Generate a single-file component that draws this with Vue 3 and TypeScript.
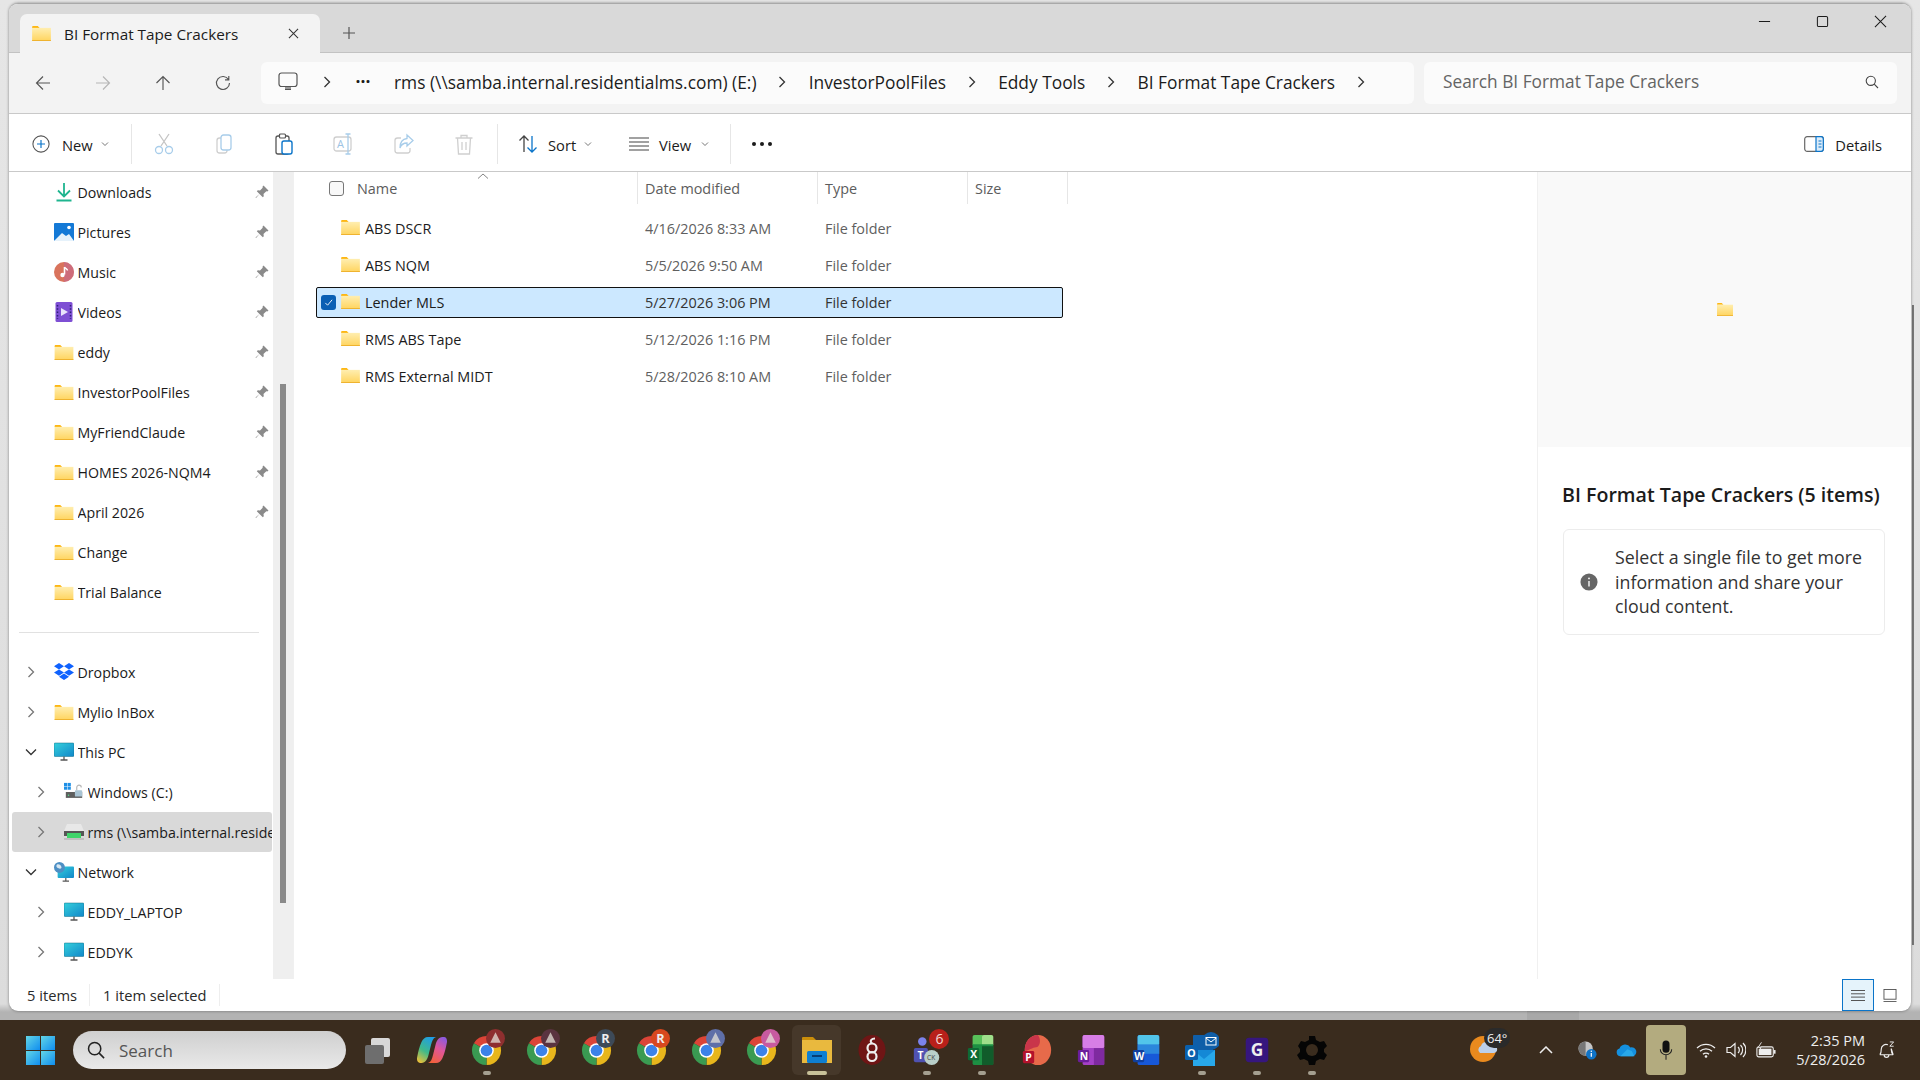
<script setup lang="ts">
interface NavRow {
  label: string
  icon: string
  level?: number
  chev?: "right" | "down"
  pinned?: boolean
  current?: boolean
}

const quickRows: NavRow[] = [
  { label: "Downloads", icon: "downloads", pinned: true },
  { label: "Pictures", icon: "pictures", pinned: true },
  { label: "Music", icon: "music", pinned: true },
  { label: "Videos", icon: "videos", pinned: true },
  { label: "eddy", icon: "folder", pinned: true },
  { label: "InvestorPoolFiles", icon: "folder", pinned: true },
  { label: "MyFriendClaude", icon: "folder", pinned: true },
  { label: "HOMES 2026-NQM4", icon: "folder", pinned: true },
  { label: "April 2026", icon: "folder", pinned: true },
  { label: "Change", icon: "folder" },
  { label: "Trial Balance", icon: "folder" },
]

const treeRows: NavRow[] = [
  { label: "Dropbox", icon: "dropbox", chev: "right" },
  { label: "Mylio InBox", icon: "folder", chev: "right" },
  { label: "This PC", icon: "monitor", chev: "down" },
  { label: "Windows (C:)", icon: "cdrive", chev: "right", level: 1 },
  { label: "rms (\\\\samba.internal.residentialms.com) (E:)", icon: "netdrive", chev: "right", level: 1, current: true },
  { label: "Network", icon: "network", chev: "down" },
  { label: "EDDY_LAPTOP", icon: "monitor", chev: "right", level: 1 },
  { label: "EDDYK", icon: "monitor", chev: "right", level: 1 },
]

const files = [
  { name: "ABS DSCR", date: "4/16/2026 8:33 AM" },
  { name: "ABS NQM", date: "5/5/2026 9:50 AM" },
  { name: "Lender MLS", date: "5/27/2026 3:06 PM", selected: true },
  { name: "RMS ABS Tape", date: "5/12/2026 1:16 PM" },
  { name: "RMS External MIDT", date: "5/28/2026 8:10 AM" },
]

const crumbs = ["InvestorPoolFiles", "Eddy Tools", "BI Format Tape Crackers"]

const apps = [
  { id: "taskview" },
  { id: "copilot" },
  { id: "chrome", badge: "#8e2f2f", dot: true },
  { id: "chrome", badge: "#5a3340" },
  { id: "chrome", badge: "#3d4a58", letter: "R" },
  { id: "chrome", badge: "#d8481f", letter: "R" },
  { id: "chrome", badge: "#5f6fa8" },
  { id: "chrome", badge: "#c75aa0" },
  { id: "explorer", active: true },
  { id: "wireguard" },
  { id: "teams", dot: true },
  { id: "excel", dot: true },
  { id: "ppt" },
  { id: "onenote" },
  { id: "word" },
  { id: "outlook", dot: true },
  { id: "gapp", dot: true },
  { id: "gear", dot: true },
]
</script>

<template>
  <div class="screen">
    <svg class="sprite" aria-hidden="true">
      <defs>
        <linearGradient id="fold" x1="0" y1="0" x2="0" y2="1">
          <stop offset="0" stop-color="#ffeeb0" />
          <stop offset="1" stop-color="#ffd45e" />
        </linearGradient>
        <linearGradient id="screenBlue" x1="0" y1="0" x2="1" y2="1">
          <stop offset="0" stop-color="#35d0dc" />
          <stop offset="1" stop-color="#1187c9" />
        </linearGradient>
        <linearGradient id="winBlue" x1="0" y1="0" x2="1" y2="1">
          <stop offset="0" stop-color="#63d6e6" />
          <stop offset="1" stop-color="#0f8df0" />
        </linearGradient>
        <linearGradient id="copA" x1="0.7" y1="0" x2="0.2" y2="1">
          <stop offset="0" stop-color="#1f9de6" />
          <stop offset="0.55" stop-color="#3fb98a" />
          <stop offset="1" stop-color="#e8c03a" />
        </linearGradient>
        <linearGradient id="copB" x1="0.7" y1="0" x2="0.2" y2="1">
          <stop offset="0" stop-color="#f2603c" />
          <stop offset="0.55" stop-color="#e0569a" />
          <stop offset="1" stop-color="#8a5ae0" />
        </linearGradient>
      </defs>
      <symbol id="folder" viewBox="0 0 20 16">
        <path d="M0 1.200C0 .5.5 0 1.200 0H6l2 2.200H0z" fill="#fdb714" />
        <rect x="0" y="2" width="20" height="14" fill="url(#fold)" />
        <rect x="0" y="15" width="20" height="1" fill="#eeb02c" />
      </symbol>
      <symbol id="downloads" viewBox="0 0 20 20">
        <path d="M10 1v13M4 8.500l6 6 6-6" fill="none" stroke="#1fb58f" stroke-width="1.800" />
        <path d="M2.500 18.500h15" stroke="#1fb58f" stroke-width="1.800" />
      </symbol>
      <symbol id="pictures" viewBox="0 0 20 20">
        <rect y="1" width="20" height="18" rx="1" fill="#1479d6" />
        <path d="M0 19l8-8 4 3 3-2 5 7z" fill="#e6f2fb" />
        <circle cx="15" cy="5.500" r="1.800" fill="#fff" />
      </symbol>
      <symbol id="music" viewBox="0 0 20 20">
        <circle cx="10" cy="10" r="10" fill="#d9735c" />
        <path d="M10 0a10 10 0 0 1 0 20z" fill="#c4678f" opacity=".6" />
        <path d="M10.500 5v7.500" stroke="#fff" stroke-width="1.600" />
        <path d="M10.500 5c1 1.800 3 1.800 3 3.500" fill="none" stroke="#fff" stroke-width="1.400" />
        <circle cx="8.500" cy="13" r="2.200" fill="#fff" />
      </symbol>
      <symbol id="videos" viewBox="0 0 20 20">
        <rect x="1.500" width="17" height="20" rx="1.500" fill="#7e4fd4" />
        <path d="M7 6l7 4-7 4z" fill="#e9e3fb" />
        <path d="M3.500 3v14M16.500 3v14" stroke="#2f2178" stroke-width="1.500" stroke-dasharray="1.500 1.800" />
      </symbol>
      <symbol id="dropbox" viewBox="0 0 20 18">
        <path d="M5 0l5 3.200-5 3.200L0 3.200zM15 0l5 3.200-5 3.200-5-3.200zM0 9.600l5-3.200 5 3.200-5 3.200zM15 6.400l5 3.200-5 3.200-5-3.200zM5 13.800l5-3.200 5 3.200L10 17z" fill="#0f62fe" />
      </symbol>
      <symbol id="monitor" viewBox="0 0 20 18">
        <rect width="20" height="13.500" rx="1" fill="url(#screenBlue)" stroke="#0f6d86" stroke-width=".5" />
        <path d="M10 13.500v3M6.500 17h7" stroke="#555" stroke-width="1.300" />
      </symbol>
      <symbol id="cdrive" viewBox="0 0 22 20">
        <rect x="0" y="0" width="3.500" height="3.500" fill="#1e8fe6" />
        <rect x="4" y="0" width="3.500" height="3.500" fill="#1e8fe6" />
        <rect x="0" y="4" width="3.500" height="3.500" fill="#1e8fe6" />
        <rect x="4" y="4" width="3.500" height="3.500" fill="#1e8fe6" />
        <path d="M2 10h18v6.500H2z" fill="#5f5f5f" />
        <circle cx="5" cy="13.500" r=".8" fill="#52e08a" />
        <rect x="12" y="8" width="8" height="7" rx="1" fill="#a9c4d4" />
        <path d="M14 8V5a2.500 2.500 0 0 1 5 0" fill="none" stroke="#b8b8b8" stroke-width="1.300" />
      </symbol>
      <symbol id="netdrive" viewBox="0 0 20 16">
        <path d="M3 0h14l3 7H0z" fill="#e8e8e8" />
        <rect y="7" width="20" height="5" fill="#555" />
        <rect x="3" y="9" width="14" height="6" fill="#3fd46a" />
        <rect y="14" width="20" height="2" fill="#bfbfbf" />
      </symbol>
      <symbol id="network" viewBox="0 0 22 22">
        <rect x="4" y="5" width="18" height="12.500" rx="1" fill="url(#screenBlue)" />
        <path d="M13 17.500v3M9.500 21h7" stroke="#555" stroke-width="1.300" />
        <circle cx="6" cy="6" r="6" fill="#4d8fc4" />
        <path d="M3 3c2-1 4 0 5 2s-1 3-3 2-3-2-2-4z" fill="#d8e8f2" />
      </symbol>
      <symbol id="pin" viewBox="0 0 14 14">
        <path d="M8.500.5l5 5-1.200 1-1-.2L8.500 9l.3 2.200-1 1L4.500 9 1 13l-.5-.5L4.500 9 1.800 6.200l1-1L5 5.500 7.700 2.700l-.2-1z" fill="#8a8a8a" />
      </symbol>
      <symbol id="chrome" viewBox="0 0 48 48">
        <path d="M24 24L6.680 14A20 20 0 0 1 41.320 14z" fill="#db4437" />
        <path d="M24 24L41.320 14A20 20 0 0 1 24 44z" fill="#e8b61c" />
        <path d="M24 24L24 44A20 20 0 0 1 6.680 14z" fill="#3a9b52" />
        <circle cx="24" cy="24" r="10" fill="#fff" />
        <circle cx="24" cy="24" r="8" fill="#3b82e8" />
      </symbol>
    </svg>

    <div class="desktop">
      <i class="behind-bar"></i>
      <i class="behind-tab"></i>
      <section class="win">
        <header class="tabstrip">
          <div class="tab">
            <svg class="ic-folder tab-folder"><use href="#folder" /></svg>
            <span class="tab-title">BI Format Tape Crackers</span>
            <svg class="tab-x" viewBox="0 0 12 12"><path d="M1 1l10 10M11 1L1 11" /></svg>
          </div>
          <svg class="tab-plus" viewBox="0 0 12 12"><path d="M6 0v12M0 6h12" /></svg>
          <div class="winctl">
            <svg viewBox="0 0 14 14"><path d="M1 7h12" /></svg>
            <svg viewBox="0 0 14 14"><rect x="1.500" y="1.500" width="11" height="11" rx="1.500" /></svg>
            <svg viewBox="0 0 14 14"><path d="M1 1l12 12M13 1L1 13" /></svg>
          </div>
        </header>

        <nav class="navbar">
          <button class="navbtn">
            <svg viewBox="0 0 16 16"><path d="M15 8H1.500M8 1.500L1.500 8 8 14.500" /></svg>
          </button>
          <button class="navbtn off">
            <svg viewBox="0 0 16 16"><path d="M1 8h13.500M8 1.500L14.500 8 8 14.500" /></svg>
          </button>
          <button class="navbtn">
            <svg viewBox="0 0 16 16"><path d="M8 15V1.500M1.500 8L8 1.500 14.500 8" /></svg>
          </button>
          <button class="navbtn">
            <svg viewBox="0 0 16 16"><path d="M13.500 4.500A6.500 6.500 0 1 0 14.500 8M13.800 1v3.800H10" /></svg>
          </button>
          <div class="addr">
            <svg class="addr-pc" viewBox="0 0 20 20"><rect x="1" y="1" width="18" height="13.500" rx="2.500" /><path d="M7 17.500h6M10 14.500v3M8 14.500v3M12 14.500v3" /></svg>
            <svg class="chev first" viewBox="0 0 12 12"><path d="M3.500 1l5 5-5 5" /></svg>
            <span class="addr-dots">···</span>
            <span class="crumb rms">rms (\\samba.internal.residentialms.com) (E:)</span>
            <svg class="chev" viewBox="0 0 12 12"><path d="M3.500 1l5 5-5 5" /></svg>
            <template v-for="c in crumbs" :key="c">
              <span class="crumb">{{ c }}</span>
              <svg class="chev" viewBox="0 0 12 12"><path d="M3.500 1l5 5-5 5" /></svg>
            </template>
          </div>
          <div class="search">
            <span>Search BI Format Tape Crackers</span>
            <svg viewBox="0 0 14 14"><circle cx="5.800" cy="5.800" r="4.600" /><path d="M9.200 9.200L13 13" /></svg>
          </div>
        </nav>

        <div class="toolbar">
          <svg class="tb-new" viewBox="0 0 20 20">
            <circle cx="10" cy="10" r="9" fill="none" stroke="#555" stroke-width="1.200" />
            <path d="M10 5.500v9M5.500 10h9" stroke="#0a74c9" stroke-width="1.300" />
          </svg>
          <span class="tb-label new">New</span>
          <svg class="caret" viewBox="0 0 8 8"><path d="M1 2.500l3 3 3-3" /></svg>
          <i class="tb-div"></i>
          <svg class="tb-ic first" viewBox="0 0 22 22">
            <path d="M6 1l8 12M16 1L8 13" stroke="#c4c4c4" stroke-width="1.300" fill="none" />
            <circle cx="6" cy="17" r="3.500" fill="none" stroke="#a8cdea" stroke-width="1.300" />
            <circle cx="16" cy="17" r="3.500" fill="none" stroke="#a8cdea" stroke-width="1.300" />
          </svg>
          <svg class="tb-ic" viewBox="0 0 22 22">
            <rect x="4" y="5" width="10" height="15" rx="2.500" fill="none" stroke="#cfcfcf" stroke-width="1.300" />
            <rect x="8" y="2" width="10" height="15" rx="2.500" fill="#fff" stroke="#a8cdea" stroke-width="1.300" />
          </svg>
          <svg class="tb-ic" viewBox="0 0 22 22">
            <rect x="3" y="3" width="13" height="18" rx="2" fill="none" stroke="#555" stroke-width="1.300" />
            <rect x="6.500" y="1" width="6" height="4" rx="1" fill="#fff" stroke="#555" stroke-width="1.200" />
            <rect x="9" y="8" width="10" height="13" rx="2" fill="#fff" stroke="#0a74c9" stroke-width="1.400" />
          </svg>
          <svg class="tb-ic" viewBox="0 0 22 22">
            <rect x="1" y="4" width="17" height="14" rx="2.500" fill="none" stroke="#cfcfcf" stroke-width="1.300" />
            <path d="M15 1v20M12.500 1h5M12.500 21h5" stroke="#a8cdea" stroke-width="1.300" fill="none" />
            <text x="4" y="15" class="tb-a">A</text>
          </svg>
          <svg class="tb-ic" viewBox="0 0 22 22">
            <path d="M8 5H4.500A2.500 2.500 0 0 0 2 7.500v10A2.500 2.500 0 0 0 4.500 20h10a2.500 2.500 0 0 0 2.500-2.500V15" fill="none" stroke="#cfcfcf" stroke-width="1.300" />
            <path d="M14 2l6 5.500-6 5.500V10C10 10 8 12 7 15c0-5 2-9 7-9.500z" fill="#fff" stroke="#a8cdea" stroke-width="1.300" />
          </svg>
          <svg class="tb-ic" viewBox="0 0 22 22">
            <path d="M2.500 5h17M8 5V2.500h6V5M4.500 5l1 16h11l1-16M9 9v8M13 9v8" fill="none" stroke="#cfcfcf" stroke-width="1.300" />
          </svg>
          <i class="tb-div"></i>
          <svg class="tb-sort" viewBox="0 0 20 20">
            <path d="M6 18V2M1.500 6.500L6 2l4.500 4.500" fill="none" stroke="#444" stroke-width="1.300" />
            <path d="M14 2v16M9.500 13.500L14 18l4.500-4.500" fill="none" stroke="#0a74c9" stroke-width="1.300" />
          </svg>
          <span class="tb-label sort">Sort</span>
          <svg class="caret" viewBox="0 0 8 8"><path d="M1 2.500l3 3 3-3" /></svg>
          <svg class="tb-view" viewBox="0 0 20 14"><path d="M0 1h20M0 5h20M0 9h20M0 13h20" /></svg>
          <span class="tb-label view">View</span>
          <svg class="caret" viewBox="0 0 8 8"><path d="M1 2.500l3 3 3-3" /></svg>
          <i class="tb-div last"></i>
          <span class="tb-more"><i></i><i></i><i></i></span>
          <div class="details-btn">
            <svg viewBox="0 0 20 16">
              <rect x=".7" y=".7" width="18.600" height="14.600" rx="2.500" fill="none" stroke="#666" stroke-width="1.200" />
              <path d="M12 .7h5a2.300 2.300 0 0 1 2.300 2.300v10a2.300 2.300 0 0 1-2.300 2.300h-5z" fill="#dcecf9" stroke="#0a74c9" stroke-width="1.200" />
              <path d="M14.500 5h3M14.500 8h3M14.500 11h3" stroke="#0a74c9" stroke-width="1" />
            </svg>
            <span>Details</span>
          </div>
        </div>

        <div class="body">
          <aside class="sidebar">
            <div class="tree">
              <div
                v-for="r in quickRows"
                :key="r.label"
                class="row"
              >
                <span class="row-chev"></span>
                <svg class="row-ic" :class="r.icon === 'folder' ? 'is-folder' : ''"><use :href="'#' + r.icon" /></svg>
                <span class="row-label">{{ r.label }}</span>
                <svg v-if="r.pinned" class="row-pin"><use href="#pin" /></svg>
              </div>
              <div class="tree-sep"><i></i></div>
              <div
                v-for="r in treeRows"
                :key="r.label"
                class="row"
                :class="{ sub: r.level === 1, current: r.current }"
              >
                <svg class="row-chev" :class="r.chev" viewBox="0 0 12 12">
                  <path v-if="r.chev === 'right'" d="M3.500 1l5 5-5 5" />
                  <path v-else d="M1 3.500l5 5 5-5" />
                </svg>
                <svg class="row-ic" :class="r.icon === 'folder' ? 'is-folder' : ''"><use :href="'#' + r.icon" /></svg>
                <span class="row-label">{{ r.label }}</span>
              </div>
            </div>
          </aside>
          <div class="side-track"><i></i></div>

          <main class="files">
            <div class="head">
              <div class="hcell name">
                <span class="hcheck"></span>
                <span>Name</span>
                <svg class="sort-up" viewBox="0 0 12 6"><path d="M1 5.500L6 1l5 4.500" /></svg>
              </div>
              <div class="hcell date">Date modified</div>
              <div class="hcell type">Type</div>
              <div class="hcell size">Size</div>
            </div>
            <div class="rows">
              <div v-for="f in files" :key="f.name" class="frow" :class="{ sel: f.selected }">
                <div class="fname">
                  <span class="fcheck">
                    <svg viewBox="0 0 10 10"><path d="M1.500 5.500l2.500 2.500 5-6" /></svg>
                  </span>
                  <svg class="ic-folder"><use href="#folder" /></svg>
                  <span>{{ f.name }}</span>
                </div>
                <div class="fdate">{{ f.date }}</div>
                <div class="ftype">File folder</div>
              </div>
            </div>
          </main>

          <aside class="pane">
            <div class="preview">
              <svg class="ic-folder prev-folder"><use href="#folder" /></svg>
            </div>
            <h2>BI Format Tape Crackers (5 items)</h2>
            <div class="hint">
              <svg viewBox="0 0 20 20">
                <circle cx="10" cy="10" r="9.500" fill="#666" />
                <path d="M10 9v6" stroke="#fff" stroke-width="1.500" />
                <circle cx="10" cy="6" r="1" fill="#fff" />
              </svg>
              <p>Select a single file to get more information and share your cloud content.</p>
            </div>
          </aside>
        </div>

        <footer class="status">
          <span class="st first">5 items</span>
          <span class="st">1 item selected</span>
          <div class="viewbtns">
            <span class="vb on">
              <svg viewBox="0 0 14 12"><path d="M0 1h14M0 4.300h14M0 7.600h14M0 11h14" /></svg>
            </span>
            <span class="vb">
              <svg viewBox="0 0 14 14"><rect x=".5" y=".5" width="13" height="10.500" /><path d="M0 13.500h14" /></svg>
            </span>
          </div>
        </footer>
      </section>
    </div>

    <div class="taskbar">
      <svg class="startlogo" viewBox="0 0 29 29">
        <rect width="14" height="14" fill="url(#winBlue)" />
        <rect x="15" width="14" height="14" fill="url(#winBlue)" />
        <rect y="15" width="14" height="14" fill="url(#winBlue)" />
        <rect x="15" y="15" width="14" height="14" fill="url(#winBlue)" />
      </svg>
      <div class="tsearch">
        <svg viewBox="0 0 20 20"><circle cx="8.500" cy="8.500" r="6.800" /><path d="M13.500 13.500L19 19" /></svg>
        <span>Search</span>
      </div>
      <div class="apps">
        <div v-for="(a, i) in apps" :key="i" class="app" :class="{ active: a.active }">
          <svg v-if="a.id === 'taskview'" viewBox="0 0 30 30">
            <rect x="9" y="3" width="19" height="19" rx="2" fill="#d8d8d8" />
            <rect x="3" y="10" width="19" height="19" rx="2" fill="#6e6e6e" />
          </svg>
          <svg v-else-if="a.id === 'copilot'" viewBox="0 0 30 30">
            <path d="M11 2h8c-3 1-4 4-5 8l-2.500 10c-1 4-3 8-7 8H3c-2.500 0-3.500-3-2.800-6 1-5 2-10 4.300-15C5.800 4 8 2 11 2z" fill="url(#copA)" />
            <path d="M11 2h8c-3 1-4 4-5 8l-2.500 10c-1 4-3 8-7 8H3c-2.500 0-3.500-3-2.800-6 1-5 2-10 4.300-15C5.800 4 8 2 11 2z" fill="url(#copB)" transform="rotate(180 15 15)" />
          </svg>
          <template v-else-if="a.id === 'chrome'">
            <svg class="chromeic"><use href="#chrome" /></svg>
            <svg class="cbadge" viewBox="0 0 18 18">
              <circle cx="9" cy="9" r="9" :fill="a.badge" />
              <text v-if="a.letter" x="9" y="13" class="cletter">{{ a.letter }}</text>
              <path v-else d="M9 3l5 10H4z" fill="#e6e1d8" opacity=".75" />
            </svg>
          </template>
          <svg v-else-if="a.id === 'explorer'" viewBox="0 0 30 30">
            <path d="M0 3a1 1 0 0 1 1-1h10l3 3H0z" fill="#c98d0a" />
            <rect y="5" width="30" height="23" fill="#e9b93e" />
            <rect x="5" y="16" width="20" height="12" rx="1.500" fill="#0f7fd1" />
            <rect x="10" y="20" width="10" height="2" fill="#073e76" />
          </svg>
          <svg v-else-if="a.id === 'wireguard'" viewBox="0 0 30 30">
            <ellipse cx="15" cy="15" rx="13.500" ry="15" fill="#6f1515" />
            <circle cx="15" cy="13" r="4.500" fill="none" stroke="#eee" stroke-width="2.200" />
            <circle cx="15" cy="21.500" r="4.500" fill="none" stroke="#eee" stroke-width="2.200" />
            <path d="M15 8.500c-3-3 0-5 3-5" fill="none" stroke="#eee" stroke-width="2" />
          </svg>
          <template v-else-if="a.id === 'teams'">
            <svg viewBox="0 0 30 34">
              <circle cx="10" cy="8" r="4.500" fill="#7b83eb" />
              <rect x="1" y="15" width="15" height="15" rx="2" fill="#4f52b2" />
              <text x="5" y="27" class="tapp">T</text>
              <circle cx="20" cy="25" r="8" fill="#b9cfc9" />
              <text x="15" y="28" class="tck">CK</text>
            </svg>
            <span class="tbadge">6</span>
          </template>
          <svg v-else-if="a.id === 'excel'" viewBox="0 0 30 34">
            <rect x="5" y="1" width="12" height="12" rx="2" fill="#58c15a" />
            <rect x="15" y="1" width="12" height="12" rx="2" fill="#9fe08b" />
            <path d="M5 11h22v20a2 2 0 0 1-2 2H7a2 2 0 0 1-2-2z" fill="#1d8f43" />
            <rect x="15" y="13" width="12" height="20" fill="#115c2b" />
            <rect y="15" width="12" height="13" rx="1.500" fill="#0e6a35" />
            <text x="2.500" y="26" class="tapp">X</text>
          </svg>
          <svg v-else-if="a.id === 'ppt'" viewBox="0 0 30 34">
            <ellipse cx="16" cy="17" rx="14" ry="16" fill="#e76a4a" />
            <path d="M16 1C8 1 2 8 2 17c0 3 8-3 12-3s6-8 2-13z" fill="#c9354a" />
            <rect y="18" width="12" height="13" rx="1.500" fill="#b3122c" />
            <text x="2.500" y="29" class="tapp">P</text>
          </svg>
          <svg v-else-if="a.id === 'onenote'" viewBox="0 0 30 34">
            <rect x="5" y="1" width="23" height="32" rx="2" fill="#a440c6" />
            <rect x="5" y="1" width="23" height="14" rx="2" fill="#d77ee6" />
            <rect x="17" y="15" width="11" height="18" fill="#7f2aa0" />
            <rect y="17" width="12" height="13" rx="1.500" fill="#6b1d9c" />
            <text x="2" y="28" class="tapp">N</text>
          </svg>
          <svg v-else-if="a.id === 'word'" viewBox="0 0 30 34">
            <rect x="5" y="1" width="23" height="32" rx="2" fill="#1758d8" />
            <rect x="5" y="1" width="23" height="11" rx="2" fill="#52c5ea" />
            <rect x="5" y="11" width="23" height="10" fill="#2b86dc" />
            <rect y="17" width="12" height="13" rx="1.500" fill="#103f9e" />
            <text x="1.500" y="28" class="tapp">W</text>
          </svg>
          <template v-else-if="a.id === 'outlook'">
            <svg class="outlookic" viewBox="0 0 34 36">
              <rect x="8" y="3" width="20" height="18" rx="1" fill="#0f5ea8" />
              <path d="M8 18h22v16H8z" fill="#1488d6" />
              <path d="M8 18l11 9 11-9v16H8z" fill="#28a8ea" />
              <rect y="13" width="13" height="15" rx="1.500" fill="#0a60ad" />
              <text x="2" y="25" class="tapp">O</text>
              <circle cx="26" cy="9" r="9" fill="#0f5ea8" />
              <rect x="21" y="5.500" width="10" height="7.500" fill="none" stroke="#fff" stroke-width="1" />
              <path d="M21 6l5 4 5-4" fill="none" stroke="#fff" stroke-width="1" />
            </svg>
          </template>
          <svg v-else-if="a.id === 'gapp'" class="gapp" viewBox="0 0 30 30">
            <rect x="2" y="1" width="26" height="28" rx="4" fill="#36167e" />
            <text x="15" y="22" class="gletter">G</text>
          </svg>
          <svg v-else viewBox="0 0 30 30">
            <path d="M12 1h6l1 4 4 2 4-1 3 5-3 3v3l3 3-3 5-4-1-4 2-1 4h-6l-1-4-4-2-4 1-3-5 3-3v-3L1 11l3-5 4 1 4-2z" fill="#050505" />
            <circle cx="15" cy="15" r="6" fill="#3a2c1e" />
          </svg>
          <i v-if="a.dot || a.active" class="app-dot"></i>
        </div>
      </div>

      <div class="tray">
        <div class="tr weather">
          <svg viewBox="0 0 30 34">
            <circle cx="13" cy="20" r="13" fill="#e98a1e" />
            <path d="M10 24a4 4 0 0 1 1-7 6 6 0 0 1 11-1 4 4 0 0 1 2 8z" fill="#bcd0ea" />
          </svg>
          <span class="temp">64°</span>
        </div>
        <div class="tr caret-up">
          <svg viewBox="0 0 14 8"><path d="M1 7l6-6 6 6" /></svg>
        </div>
        <div class="tr cloudinfo">
          <svg viewBox="0 0 22 20">
            <circle cx="9" cy="8" r="7.500" fill="#c6c6c6" />
            <path d="M9 .5a7.500 7.500 0 0 0 0 15z" fill="#777" />
            <circle cx="15" cy="14" r="5.500" fill="#0f74c8" />
            <path d="M15 12.500v4" stroke="#fff" stroke-width="1.300" />
            <circle cx="15" cy="10.800" r=".8" fill="#fff" />
          </svg>
        </div>
        <div class="tr onedrive">
          <svg viewBox="0 0 24 16">
            <path d="M5 15a4.500 4.500 0 0 1-1-8.800A7 7 0 0 1 16.500 5a5 5 0 0 1 3 10z" fill="#1490df" />
            <path d="M5 15l8-8 5 2 3 6z" fill="#28a8ea" />
          </svg>
        </div>
        <div class="tr mic">
          <svg viewBox="0 0 16 24">
            <rect x="4" y="1" width="8" height="14" rx="4" fill="#111" />
            <path d="M1.500 11a6.500 6.500 0 0 0 13 0M8 17.500V23" fill="none" stroke="#222" stroke-width="1.200" />
          </svg>
        </div>
        <div class="tr wifi">
          <svg viewBox="0 0 20 16">
            <path d="M1 6a13 13 0 0 1 18 0M4 9.300a8.500 8.500 0 0 1 12 0M7 12.300a4.200 4.200 0 0 1 6 0" fill="none" stroke="#eee" stroke-width="1.300" />
            <circle cx="10" cy="14.500" r="1.300" fill="#eee" />
          </svg>
        </div>
        <div class="tr vol">
          <svg viewBox="0 0 20 16">
            <path d="M1 5.500h3.500L9 1.500v13l-4.500-4H1z" fill="none" stroke="#eee" stroke-width="1.200" />
            <path d="M12 5a4 4 0 0 1 0 6M14.500 3a7 7 0 0 1 0 10M17 1a10 10 0 0 1 0 14" fill="none" stroke="#eee" stroke-width="1.200" />
          </svg>
        </div>
        <div class="tr batt">
          <svg viewBox="0 0 22 18">
            <rect x="1" y="5" width="18" height="11" rx="2" fill="none" stroke="#eee" stroke-width="1.200" />
            <rect x="3" y="7" width="14" height="7" fill="#eee" />
            <rect x="19.500" y="8.500" width="2" height="4" fill="#eee" />
            <path d="M6 0L2.500 5.500h3L4 9" fill="#3a2c1e" stroke="#eee" stroke-width="1" />
          </svg>
        </div>
        <div class="clock">
          <span>2:35 PM</span>
          <span>5/28/2026</span>
        </div>
        <div class="tr bell">
          <svg viewBox="0 0 20 20">
            <path d="M3 14.500c1.500-1.500 1.500-3 1.500-6a5 5 0 0 1 7-4.500M15 8v1c0 2.500.5 4 2 5.500zM3 14.500h14M7.500 14.800a2.500 2.500 0 0 0 5 0" fill="none" stroke="#eee" stroke-width="1.200" />
            <path d="M13.500 1h4l-4 4.500h4" fill="none" stroke="#eee" stroke-width="1" />
          </svg>
        </div>
      </div>
    </div>
  </div>
</template>

<style>
html,
body {
  margin: 0;
  overflow: hidden;
}
</style>

<style scoped>
* {
  box-sizing: border-box;
}
.screen {
  width: 1920px;
  height: 1080px;
  display: flex;
  flex-direction: column;
  font-family: "Open Sans", "Noto Sans", sans-serif;
  font-size: 14.4px;
  color: #1b1b1b;
  overflow: hidden;
}
.sprite {
  position: absolute;
  width: 0;
  height: 0;
}
.desktop {
  position: relative;
  height: 1020px;
  padding: 3px 9px 9px;
  background: linear-gradient(to bottom, #e6e6e6 0, #dcdcdc 1004px, #b3b3b3 1012px);
}
.behind-bar {
  position: absolute;
  left: 1912px;
  top: 305px;
  width: 2px;
  height: 640px;
  background: #777;
}
.behind-tab {
  position: absolute;
  left: 1527px;
  top: 1011px;
  width: 52px;
  height: 9px;
  background: #a8a8a8;
}

/* window */
.win {
  position: relative;
  height: 100%;
  display: flex;
  flex-direction: column;
  background: #fff;
  border-top: 1px solid #a9a9a9;
  border-radius: 9px;
  overflow: hidden;
  box-shadow: 0 0 3px rgba(0, 0, 0, 0.45);
}
.tabstrip {
  height: 49px;
  flex: none;
  display: flex;
  align-items: flex-end;
  background: #d9d9d9;
  border-bottom: 1px solid #c2c2c2;
  padding-left: 11px;
}
.tab {
  width: 300px;
  height: 39px;
  margin-bottom: -1px;
  display: flex;
  align-items: center;
  background: #f3f3f3;
  border-radius: 7px 7px 0 0;
  padding-left: 12px;
  font-size: 15.3px;
}
.ic-folder {
  width: 19px;
  height: 15px;
  flex: none;
}
.tab-folder {
  margin-right: 13px;
}
.tab-title {
  width: 224px;
  font-weight: 500;
  white-space: nowrap;
}
.tab-x {
  width: 11px;
  height: 11px;
  fill: none;
  stroke: #333;
  stroke-width: 1.100;
}
.tab-plus {
  width: 12px;
  height: 12px;
  margin: 0 0 13px 23px;
  fill: none;
  stroke: #555;
  stroke-width: 1.200;
}
.winctl {
  margin-left: auto;
  margin-right: 24px;
  align-self: stretch;
  display: flex;
  align-items: flex-start;
  gap: 45px;
  padding-top: 11px;
}
.winctl svg {
  width: 13px;
  height: 13px;
  fill: none;
  stroke: #1b1b1b;
  stroke-width: 1.100;
}

.navbar {
  height: 61px;
  flex: none;
  display: flex;
  align-items: center;
  background: #f3f3f3;
  border-bottom: 1px solid #c9c9c9;
  padding: 0 0 1px 4px;
}
.navbtn {
  width: 60px;
  height: 42px;
  padding: 0;
  border: 0;
  background: none;
  display: flex;
  align-items: center;
  justify-content: center;
}
.navbtn svg {
  width: 16px;
  height: 16px;
  fill: none;
  stroke: #555;
  stroke-width: 1.150;
}
.navbtn.off svg {
  stroke: #b6b6b6;
}
.addr {
  width: 1153px;
  height: 42px;
  margin-left: 8px;
  display: flex;
  align-items: center;
  padding: 0 0 2px 17px;
  background: #fbfbfb;
  border-radius: 6px;
  font-size: 17.35px;
  white-space: nowrap;
  overflow: hidden;
}
.addr-pc {
  width: 20px;
  height: 20px;
  flex: none;
  fill: none;
  stroke: #555;
  stroke-width: 1.200;
}
.chev {
  width: 12px;
  height: 12px;
  flex: none;
  margin: 0 20.600px 0 19.600px;
  fill: none;
  stroke: #333;
  stroke-width: 1.300;
}
.chev.first {
  margin: 0 0 0 23px;
}
.addr-dots {
  width: 16px;
  margin-left: 22px;
  text-align: center;
  font-weight: 700;
  line-height: 1;
}
.crumb.rms {
  margin-left: 23px;
}
.search {
  width: 473px;
  height: 42px;
  margin-left: 10px;
  display: flex;
  align-items: center;
  justify-content: space-between;
  padding: 0 18px 2px 19px;
  background: #fbfbfb;
  border-radius: 6px;
  color: #646464;
  font-size: 17.3px;
}
.search svg {
  width: 14px;
  height: 14px;
  fill: none;
  stroke: #444;
  stroke-width: 1.100;
}

.toolbar {
  height: 58px;
  flex: none;
  display: flex;
  align-items: center;
  background: #fff;
  border-bottom: 1px solid #c9c9c9;
  padding: 2px 0 0 23px;
  font-size: 14.7px;
}
.tb-new {
  width: 18px;
  height: 18px;
  flex: none;
}
.tb-label {
  flex: none;
  white-space: nowrap;
  padding-top: 2px;
}
.tb-label.new {
  width: 33px;
  margin-left: 12px;
}
.caret {
  width: 8px;
  height: 8px;
  flex: none;
  margin-left: 6px;
  fill: none;
  stroke: #666;
  stroke-width: 0.900;
}
.tb-div {
  width: 1px;
  height: 40px;
  flex: none;
  margin-left: 22px;
  background: #e6e6e6;
}
.tb-ic {
  width: 22px;
  height: 22px;
  flex: none;
  margin-left: 38px;
}
.tb-ic.first {
  margin-left: 21px;
}
.tb-a {
  font: 11px "Open Sans", sans-serif;
  fill: #9cc3e4;
}
.tb-sort {
  width: 20px;
  height: 20px;
  flex: none;
  margin-left: 20px;
}
.tb-label.sort {
  width: 30px;
  margin-left: 10px;
}
.tb-view {
  width: 20px;
  height: 14px;
  flex: none;
  margin-left: 37px;
  fill: none;
  stroke: #444;
  stroke-width: 1.100;
}
.tb-label.view {
  width: 36px;
  margin-left: 10px;
}
.tb-div.last {
  margin-left: 21px;
}
.tb-more {
  display: flex;
  gap: 4px;
  margin-left: 21px;
}
.tb-more i {
  width: 4px;
  height: 4px;
  border-radius: 50%;
  background: #1b1b1b;
}
.details-btn {
  margin-left: auto;
  margin-right: 29px;
  display: flex;
  align-items: center;
  gap: 11px;
}
.details-btn svg {
  width: 20px;
  height: 16px;
}
.details-btn span {
  padding-top: 2px;
}

/* content */
.body {
  flex: 1;
  min-height: 0;
  display: flex;
}
.sidebar {
  width: 264px;
  flex: none;
  overflow: hidden;
  font-size: 14.2px;
}
.row {
  height: 40px;
  margin: 0 1px 0 3px;
  padding-left: 13px;
  display: flex;
  align-items: center;
  border-radius: 3px;
}
.row.sub {
  padding-left: 23px;
}
.row.current {
  background: #d9d9d9;
}
.row-chev {
  width: 12px;
  height: 12px;
  flex: none;
  fill: none;
  stroke: #777;
  stroke-width: 1.300;
}
.row-chev.down {
  stroke: #333;
}
.row-ic {
  width: 20px;
  height: 20px;
  flex: none;
  margin-left: 16.500px;
}
.row-ic.is-folder {
  height: 15px;
}
.row-label {
  flex: 1;
  margin-left: 4px;
  white-space: nowrap;
  overflow: hidden;
}
.row-pin {
  width: 14px;
  height: 14px;
  flex: none;
  margin-right: 3px;
}
.tree-sep {
  height: 40px;
  padding: 20px 12px 0 10px;
}
.tree-sep i {
  display: block;
  height: 1px;
  width: 240px;
  background: #e1e1e1;
}
.side-track {
  width: 20px;
  flex: none;
  padding: 212px 7px 0;
  background: #efefef;
  height: 807px;
}
.side-track i {
  display: block;
  height: 519px;
  width: 6px;
  background: #8a8a8a;
}

.files {
  flex: 1;
  min-width: 0;
  border-left: 1px solid #f0f0f0;
}
.head {
  height: 32px;
  display: flex;
  color: #5c5c5c;
}
.hcell {
  display: flex;
  align-items: center;
  border-right: 1px solid #e6e6e6;
  padding-left: 7px;
}
.hcell.name {
  position: relative;
  width: 344px;
  padding-left: 35px;
}
.hcheck {
  width: 15px;
  height: 15px;
  margin-right: 13px;
  border: 1px solid #777;
  border-radius: 3px;
  background: #f8f8f8;
}
.sort-up {
  position: absolute;
  left: 183px;
  top: 1px;
  width: 12px;
  height: 6px;
  fill: none;
  stroke: #777;
  stroke-width: 0.900;
}
.hcell.date {
  width: 180px;
}
.hcell.type {
  width: 150px;
}
.hcell.size {
  width: 100px;
}
.rows {
  display: flex;
  flex-direction: column;
  gap: 6px;
  margin: 9px 0 0 22px;
  width: 747px;
}
.frow {
  height: 31px;
  display: grid;
  grid-template-columns: 328px 180px 1fr;
  align-items: center;
  border: 1px solid transparent;
  border-radius: 2px;
  color: #5f5f5f;
}
.frow.sel {
  background: #cce8ff;
  border-color: #111;
  color: #333;
}
.fname {
  display: flex;
  align-items: center;
  padding-left: 4px;
  color: #1b1b1b;
}
.fname .ic-folder {
  margin: 0 5px 2px 5px;
}
.fcheck {
  width: 15px;
  height: 15px;
  flex: none;
  visibility: hidden;
  display: flex;
  align-items: center;
  justify-content: center;
  background: #0a5fb4;
  border-radius: 3px;
}
.frow.sel .fcheck {
  visibility: visible;
}
.fcheck svg {
  width: 9px;
  height: 9px;
  fill: none;
  stroke: #fff;
  stroke-width: 1;
}
.pane {
  width: 374px;
  flex: none;
  border-left: 1px solid #f0f0f0;
}
.preview {
  height: 275px;
  display: flex;
  align-items: center;
  justify-content: center;
  background: #f9f9f9;
}
.prev-folder {
  width: 16px;
  height: 13px;
}
.pane h2 {
  margin: 34px 0 0 24px;
  height: 28px;
  font-size: 19.6px;
  line-height: 28px;
  font-weight: 600;
  white-space: nowrap;
}
.hint {
  width: 322px;
  height: 106px;
  margin: 20px 0 0 25px;
  display: flex;
  align-items: center;
  border: 1px solid #ececec;
  border-radius: 6px;
  padding-left: 16px;
}
.hint svg {
  width: 18px;
  height: 18px;
  flex: none;
}
.hint p {
  margin: 0 0 0 17px;
  font-size: 17.8px;
  line-height: 24.5px;
  color: #333;
}

.status {
  height: 32px;
  flex: none;
  display: flex;
  align-items: center;
  padding-left: 18px;
  color: #2a2a2a;
  font-size: 14.7px;
}
.st {
  padding: 0 12px 0 0;
  border-right: 1px solid #eee;
  line-height: 22px;
}
.st.first {
  margin-right: 13px;
}
.viewbtns {
  margin-left: auto;
  margin-right: 5px;
  display: flex;
}
.vb {
  width: 32px;
  height: 32px;
  display: flex;
  align-items: center;
  justify-content: center;
  border: 1px solid transparent;
}
.vb.on {
  background: #e5f3fb;
  border-color: #0a74c9;
}
.vb svg {
  width: 14px;
  height: 13px;
  fill: none;
  stroke: #555;
  stroke-width: 1;
}

/* taskbar */
.taskbar {
  height: 60px;
  flex: none;
  display: flex;
  align-items: center;
  padding: 0 13px 0 26px;
  background: #3a2c1e;
  color: #eee;
}
.startlogo {
  width: 29px;
  height: 29px;
  flex: none;
}
.tsearch {
  width: 273px;
  height: 38px;
  flex: none;
  margin: 0 3.400px 0 18px;
  display: flex;
  align-items: center;
  padding-left: 14px;
  background: linear-gradient(#cfcfcf, #e9e9e9);
  border-radius: 19px;
  color: #555;
  font-size: 17px;
}
.tsearch svg {
  width: 18px;
  height: 18px;
  margin-right: 14px;
  fill: none;
  stroke: #222;
  stroke-width: 1.700;
}
.apps {
  display: flex;
  flex: none;
}
.app {
  position: relative;
  width: 55px;
  height: 60px;
  display: flex;
  align-items: center;
  justify-content: center;
}
.app.active::before {
  content: "";
  position: absolute;
  left: 3px;
  right: 3px;
  top: 5px;
  bottom: 5px;
  background: #46382a;
  border-radius: 6px;
}
.app svg {
  position: relative;
  width: 30px;
  height: 32px;
}
.app .chromeic {
  width: 35px;
  height: 35px;
}
.app .cbadge {
  position: absolute;
  left: 27px;
  top: 9px;
  width: 19px;
  height: 19px;
}
.app .outlookic {
  width: 34px;
  height: 36px;
}
.app .gapp {
  width: 26px;
  height: 30px;
}
.cletter {
  font: 700 12px "Open Sans", sans-serif;
  fill: #eee;
  text-anchor: middle;
}
.tapp {
  font: 700 11px "Open Sans", sans-serif;
  fill: #fff;
}
.tck {
  font: 7px "Open Sans", sans-serif;
  fill: #444;
}
.gletter {
  font: 700 20px "Open Sans", sans-serif;
  fill: #eee;
  text-anchor: middle;
}
.tbadge {
  position: absolute;
  left: 30px;
  top: 9px;
  width: 20px;
  height: 20px;
  border-radius: 50%;
  background: #b8201a;
  color: #f3d8d2;
  font-size: 14px;
  line-height: 20px;
  text-align: center;
}
.app-dot {
  position: absolute;
  left: 50%;
  bottom: 5px;
  width: 8px;
  height: 4px;
  margin-left: -4px;
  border-radius: 2px;
  background: #a49f90;
}
.app.active .app-dot {
  width: 20px;
  margin-left: -10px;
  background: #c8c199;
}
.tray {
  margin-left: auto;
  display: flex;
  align-items: center;
  height: 60px;
}
.tr {
  display: flex;
  align-items: center;
  justify-content: center;
  position: relative;
}
.weather {
  width: 60px;
  height: 60px;
}
.weather svg {
  width: 30px;
  height: 34px;
  margin: 0 6px 8px 0;
}
.temp {
  position: absolute;
  left: 26px;
  top: 8px;
  padding: 0 3px;
  background: #2a2a2a;
  border-radius: 10px;
  font-size: 13px;
  line-height: 20px;
}
.caret-up {
  width: 56px;
}
.caret-up svg {
  width: 14px;
  height: 8px;
  fill: none;
  stroke: #eee;
  stroke-width: 1.500;
}
.cloudinfo {
  width: 26px;
}
.cloudinfo svg {
  width: 21px;
  height: 19px;
}
.onedrive {
  width: 40px;
  margin-left: 6px;
}
.onedrive svg {
  width: 21px;
  height: 14px;
}
.mic {
  width: 40px;
  height: 50px;
  background: #b3ab7f;
  border-radius: 4px;
}
.mic svg {
  width: 14px;
  height: 22px;
}
.wifi {
  width: 40px;
}
.wifi svg {
  width: 20px;
  height: 16px;
}
.vol {
  width: 20px;
}
.vol svg {
  width: 20px;
  height: 16px;
}
.batt {
  width: 40px;
}
.batt svg {
  width: 20px;
  height: 17px;
}
.clock {
  width: 79px;
  display: flex;
  flex-direction: column;
  align-items: flex-end;
  font-size: 14.500px;
  line-height: 19.500px;
}
.bell {
  width: 42px;
}
.bell svg {
  width: 19px;
  height: 19px;
}
</style>
